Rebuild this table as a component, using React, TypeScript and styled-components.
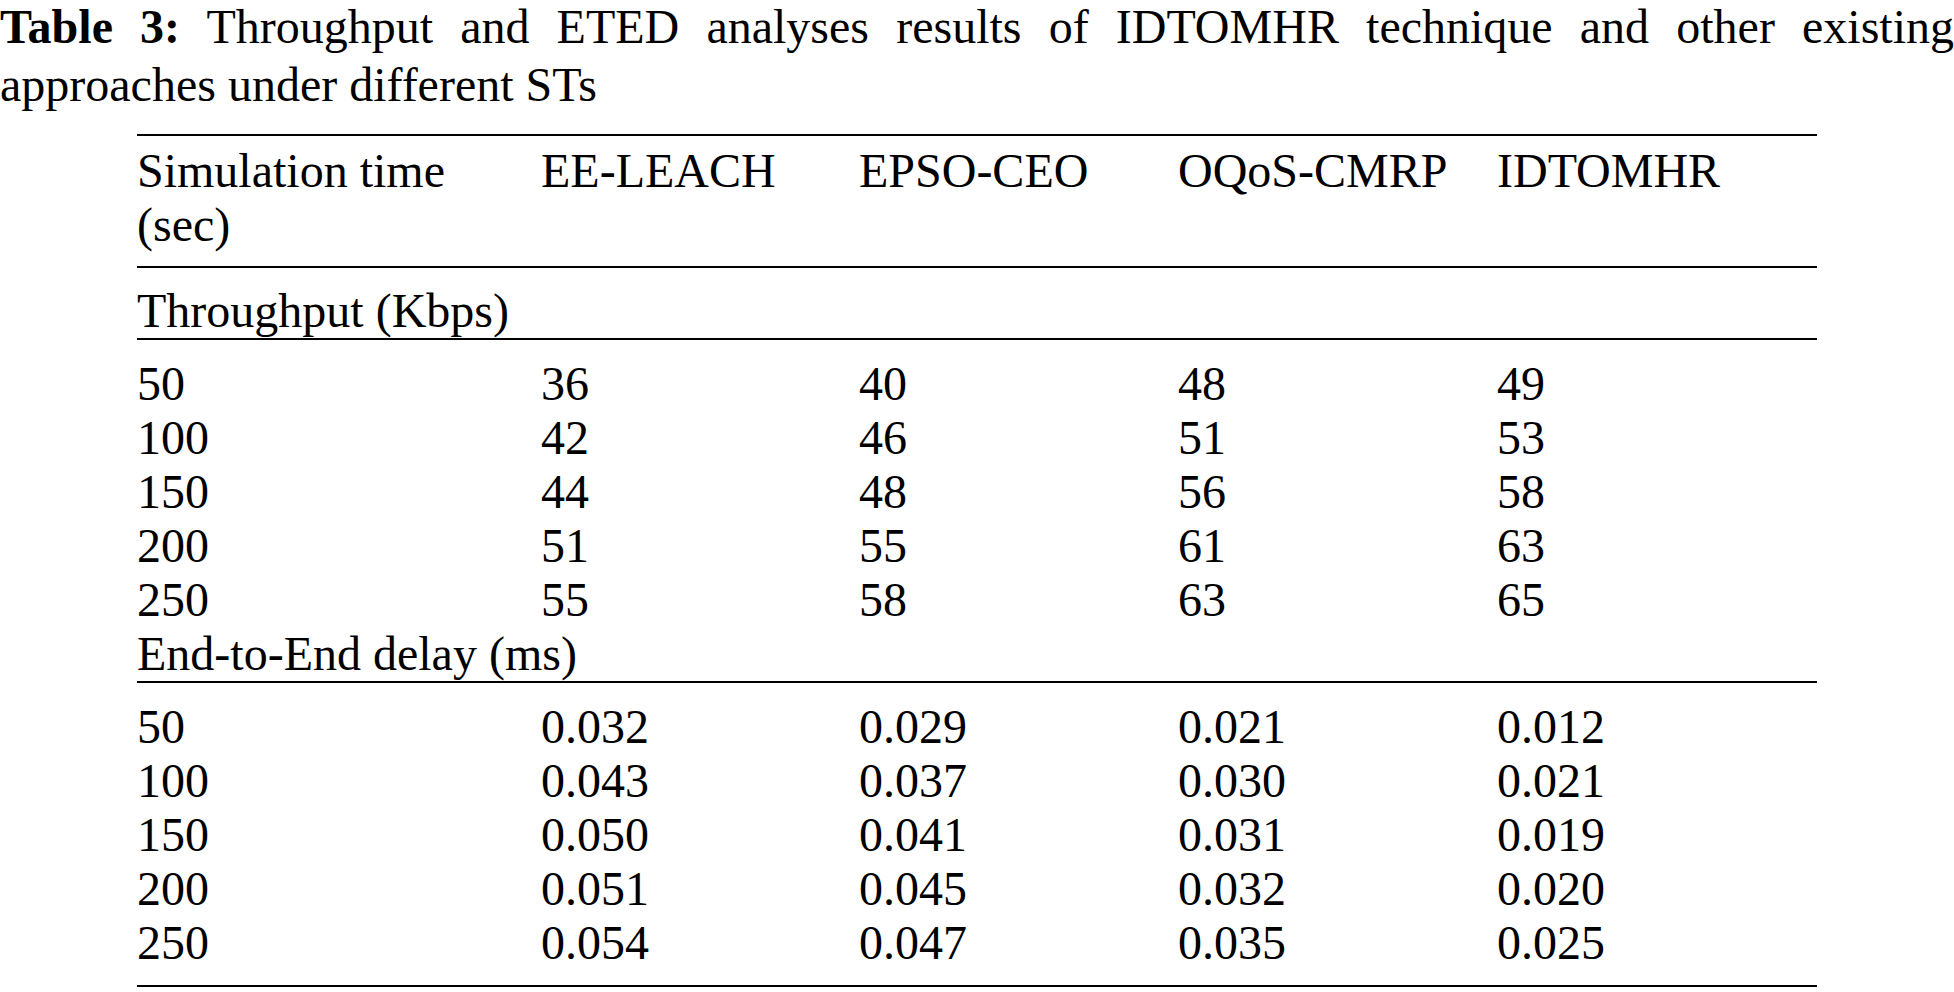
import React from 'react';
import styled, { createGlobalStyle } from 'styled-components';

const GlobalStyle = createGlobalStyle`
  html, body {
    margin: 0;
    padding: 0;
    background: #ffffff;
  }
  body {
    font-family: 'Liberation Serif', 'Times New Roman', serif;
    color: #000000;
  }
`;

const Page = styled.div`
  width: 1954px;
`;

const Caption = styled.p`
  margin: -2px 0 0 0;
  font-size: 48px;
  line-height: 58px;
  text-align: justify;
`;

const CaptionLabel = styled.b`
  font-weight: bold;
`;

const Table = styled.table`
  margin: 20px 0 0 137px;
  width: 1680px;
  border-collapse: collapse;
  font-size: 48px;
  line-height: 54px;
  table-layout: fixed;
`;

const Col = styled.col<{ $w: number }>`
  width: ${(p) => p.$w}px;
`;

const HeadRow = styled.tr`
  border-top: 2px solid #000;
  border-bottom: 2px solid #000;
`;

const HeadCell = styled.th`
  font-weight: normal;
  text-align: left;
  vertical-align: top;
  padding: 8px 0 14px 0;
`;

const GroupRow = styled.tr`
  border-bottom: 2px solid #000;
`;

const GroupCell = styled.td<{ $top: number }>`
  padding: ${(p) => p.$top}px 0 0 0;
  text-align: left;
`;

const DataRow = styled.tr<{ $last?: boolean }>`
  border-bottom: ${(p) => (p.$last ? '2px solid #000' : 'none')};
`;

const Cell = styled.td<{ $first?: boolean; $last?: boolean }>`
  padding: ${(p) => (p.$first ? 17 : 0)}px 0 ${(p) => (p.$last ? 15 : 0)}px 0;
  text-align: left;
`;

const columns = ['EE-LEACH', 'EPSO-CEO', 'OQoS-CMRP', 'IDTOMHR'];

const throughput = [
  ['50', '36', '40', '48', '49'],
  ['100', '42', '46', '51', '53'],
  ['150', '44', '48', '56', '58'],
  ['200', '51', '55', '61', '63'],
  ['250', '55', '58', '63', '65'],
];

const delay = [
  ['50', '0.032', '0.029', '0.021', '0.012'],
  ['100', '0.043', '0.037', '0.030', '0.021'],
  ['150', '0.050', '0.041', '0.031', '0.019'],
  ['200', '0.051', '0.045', '0.032', '0.020'],
  ['250', '0.054', '0.047', '0.035', '0.025'],
];

const Rows = ({ data, lastRule }: { data: string[][]; lastRule?: boolean }) => (
  <>
    {data.map((row, i) => {
      const last = lastRule && i === data.length - 1;
      return (
        <DataRow key={row[0]} $last={last}>
          {row.map((v, j) => (
            <Cell key={j} $first={i === 0} $last={last}>
              {v}
            </Cell>
          ))}
        </DataRow>
      );
    })}
  </>
);

const App = () => {
  return (
    <Page>
      <GlobalStyle />
      <Caption>
        <CaptionLabel>Table 3:</CaptionLabel> Throughput and ETED analyses results of IDTOMHR technique and other
        existing approaches under different STs
      </Caption>
      <Table>
        <colgroup>
          <Col $w={404} />
          <Col $w={318} />
          <Col $w={319} />
          <Col $w={319} />
          <Col $w={320} />
        </colgroup>
        <thead>
          <HeadRow>
            <HeadCell>
              Simulation time
              <br />
              (sec)
            </HeadCell>
            {columns.map((c) => (
              <HeadCell key={c}>{c}</HeadCell>
            ))}
          </HeadRow>
        </thead>
        <tbody>
          <GroupRow>
            <GroupCell colSpan={5} $top={16}>
              Throughput (Kbps)
            </GroupCell>
          </GroupRow>
          <Rows data={throughput} />
          <GroupRow>
            <GroupCell colSpan={5} $top={0}>
              End-to-End delay (ms)
            </GroupCell>
          </GroupRow>
          <Rows data={delay} lastRule />
        </tbody>
      </Table>
    </Page>
  );
};

export default App;
